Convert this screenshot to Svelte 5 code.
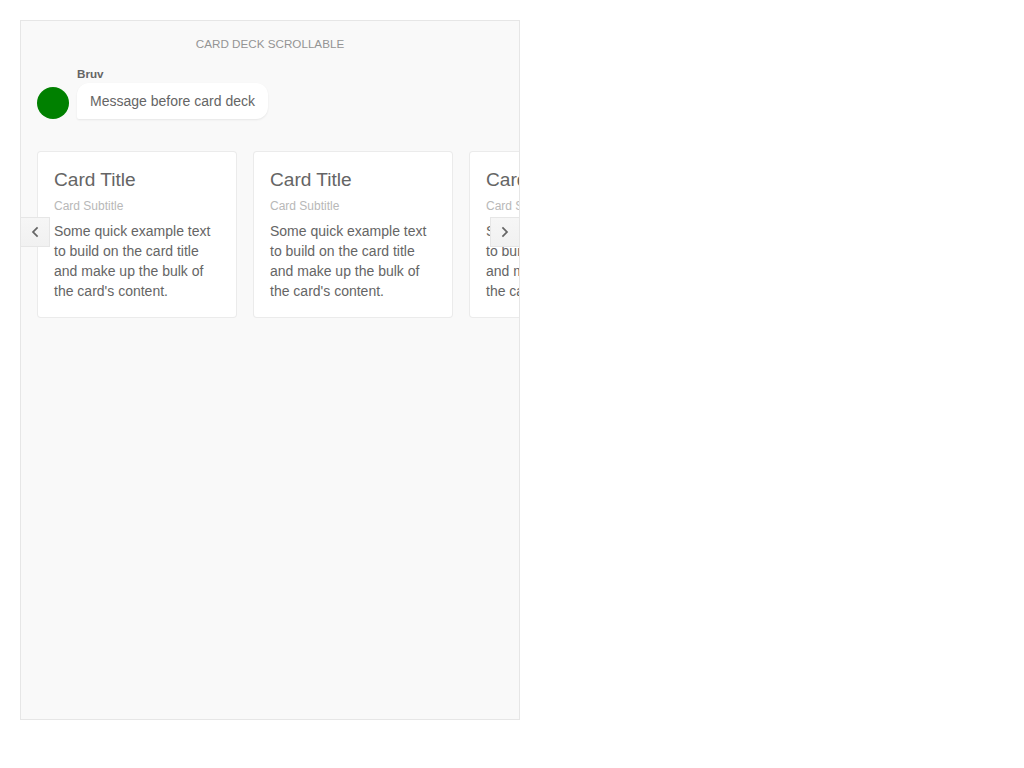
<script>
  const cards = [1, 2, 3].map((id) => ({
    id,
    title: 'Card Title',
    subtitle: 'Card Subtitle',
    text: "Some quick example text to build on the card title and make up the bulk of the card's content."
  }));
</script>

<main class="chat">
  <div class="timestamp">Card deck scrollable</div>
  <section class="group">
    <div class="avatar"></div>
    <div class="message">
      <strong class="author">Bruv</strong>
      <div class="bubble">Message before card deck</div>
    </div>
  </section>
  <section class="deck-wrap">
    <div class="deck">
      {#each cards as card (card.id)}
        <article class="card">
          <h5>{card.title}</h5>
          <h6>{card.subtitle}</h6>
          <p>{card.text}</p>
        </article>
      {/each}
    </div>
    <button class="nav prev" aria-label="Previous">
      <svg width="16" height="16" viewBox="0 0 16 16"><path d="M10 2.8 11.2 4 7.2 8l4 4-1.2 1.2L4.8 8z" /></svg>
    </button>
    <button class="nav next" aria-label="Next">
      <svg width="16" height="16" viewBox="0 0 16 16"><path d="M6 2.8 4.8 4l4 4-4 4L6 13.2 11.2 8z" /></svg>
    </button>
  </section>
</main>

<style>
  :global(body) { background: #fff; }
  .chat {
    box-sizing: border-box;
    width: 500px;
    height: 700px;
    margin: 20px;
    padding: 16px;
    overflow: hidden;
    border: 1px solid #e6e6e6;
    background: #f9f9f9;
    color: #656565;
    font: 14px/20px "Liberation Sans", Arial, sans-serif;
  }
  .timestamp {
    text-align: center;
    text-transform: uppercase;
    font-size: 11.667px;
    line-height: 14px;
    color: #949494;
  }
  .group { display: flex; gap: 8px; align-items: flex-end; margin-top: 16px; }
  .avatar { width: 32px; height: 32px; border-radius: 50%; background: green; }
  .message { display: flex; flex-direction: column; align-items: flex-start; }
  .author { font-size: 11.667px; line-height: 14px; margin-bottom: 2px; }
  .bubble {
    box-sizing: border-box;
    height: 36px;
    padding: 8px 13px;
    border-radius: 12px 12px 12px 2px;
    background: #fff;
    box-shadow: 0 1px 2px rgba(0, 0, 0, 0.08);
  }
  .deck-wrap { position: relative; margin: 32px -16px 0; }
  .deck { display: flex; gap: 16px; padding: 0 16px; overflow: hidden; }
  .card {
    box-sizing: border-box;
    flex: 0 0 200px;
    height: 167px;
    padding: 16px;
    border: 1px solid rgba(0, 0, 0, 0.08);
    border-radius: 4px;
    background: #fff;
  }
  h5, h6, p { margin: 0; font-weight: 400; }
  h5 { font-size: 19.1px; line-height: 24px; }
  h6 { margin: 6px 0 7px; font-size: 12px; line-height: 16px; color: #b8b8b8; }
  .nav {
    position: absolute;
    top: 66px;
    display: flex;
    align-items: center;
    justify-content: center;
    width: 30px;
    height: 30px;
    padding: 0;
    border: 1px solid #e6e6e6;
    background: linear-gradient(#f6f6f6, #f1f1f1);
    color: #656565;
  }
  .prev { left: -1px; }
  .next { right: -1px; }
  svg path { fill: currentColor; }
</style>
